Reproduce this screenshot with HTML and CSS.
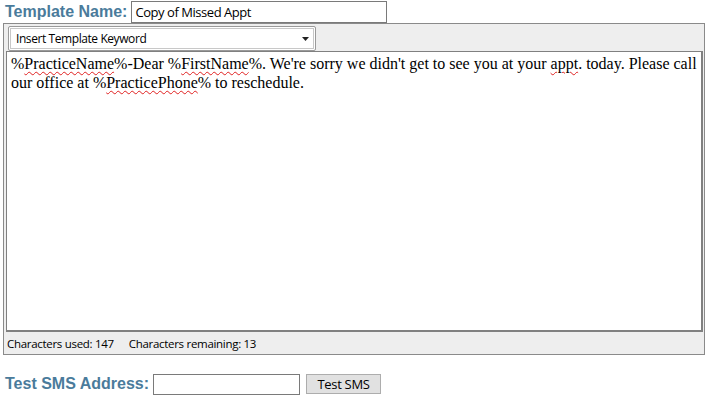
FILE: index.html
```html
<!DOCTYPE html>
<html>
<head>
<meta charset="utf-8">
<link rel="stylesheet" href="styles.css">
</head>
<body>
<div class="row row-top">
  <span class="lbl">Template Name:</span>
  <div class="inp name-inp">Copy of Missed Appt</div>
</div>
<div class="panel">
  <div class="sel-wrap">
    <div class="sel">
      <span>Insert Template Keyword</span>
      <svg class="caret" width="7" height="4" viewBox="0 0 7 4"><path d="M0 0H7L3.5 4Z" fill="#222"/></svg>
    </div>
  </div>
  <div class="ta">%<span class="sp">PracticeName</span>%-Dear %<span class="sp">FirstName</span>%. We're sorry we didn't get to see you at your <span class="sp">appt</span>. today. Please call our office at %<span class="sp">PracticePhone</span>% to reschedule.</div>
  <div class="status"><span>Characters used: 147</span><span class="remain">Characters remaining: 13</span></div>
</div>
<div class="row row-bot">
  <span class="lbl">Test SMS Address:</span>
  <div class="inp sms-inp"></div>
  <div class="btn">Test SMS</div>
</div>
</body>
</html>
```
FILE: styles.css
```css
html, body {
  margin: 0;
  padding: 0;
  background: #fff;
}
body {
  font-family: "Open Sans", "Noto Sans", sans-serif;
  font-size: 12px;
  color: #000;
}
.row {
  display: flex;
  align-items: center;
  padding-left: 5px;
}
.row-top {
  height: 23px;
  align-items: flex-start;
}
.lbl {
  font-family: "Liberation Sans", Arial, sans-serif;
  font-weight: bold;
  font-size: 16px;
  color: #4a7b9b;
  line-height: 18px;
}
.row-top .lbl {
  margin-top: 3px;
}
.inp {
  box-sizing: border-box;
  border: 1px solid #7a7a7a;
  background: #fff;
  display: flex;
  align-items: center;
  padding-left: 3px;
  font-size: 13px;
  letter-spacing: -0.45px;
}
.name-inp {
  width: 256px;
  height: 22px;
  margin-left: 4px;
  margin-top: 1px;
}
.panel {
  margin: 0 2px 0 3px;
  border: 1px solid #8a8a8a;
  background: #eeeeee;
  box-sizing: border-box;
  height: 332px;
  display: flex;
  flex-direction: column;
}
.sel-wrap {
  padding: 2px 0 0 4px;
  height: 25px;
  box-sizing: content-box;
}
.sel {
  box-sizing: border-box;
  width: 308px;
  height: 25px;
  border: 1px solid #9a9a9a;
  border-radius: 2px;
  box-shadow: inset 0 0 0 1px #fff, inset 0 0 0 2px #c8c8c8;
  background: #fff;
  display: flex;
  align-items: center;
  justify-content: space-between;
  padding: 0 6px 0 7px;
  letter-spacing: -0.42px;
}
.caret {
  display: block;
  margin-top: 1px;
}
.ta {
  box-sizing: border-box;
  margin-left: 2px;
  width: 697px;
  height: 281px;
  background: #fff;
  border: 1px solid #808080;
  border-right-width: 2px;
  border-bottom-width: 2px;
  font-family: "Liberation Serif", "Times New Roman", serif;
  font-size: 16px;
  line-height: 19px;
  padding: 2px 4px 0 4px;
}
.sp {
  text-decoration: underline wavy #e02020;
  text-decoration-thickness: 1px;
  text-underline-offset: 2px;
}
.status {
  height: 22px;
  display: flex;
  align-items: center;
  padding-left: 3px;
  font-size: 11.5px;
  letter-spacing: -0.3px;
}
.remain {
  margin-left: 15px;
}
.row-bot {
  margin-top: 18px;
  height: 22px;
}
.sms-inp {
  width: 147px;
  height: 21px;
  margin-left: 4px;
}
.btn {
  box-sizing: border-box;
  width: 75px;
  height: 20px;
  margin-left: 6px;
  background: #e1e1e1;
  border: 1px solid #adadad;
  display: flex;
  align-items: center;
  justify-content: center;
  font-size: 13px;
  letter-spacing: -0.3px;
}
```
